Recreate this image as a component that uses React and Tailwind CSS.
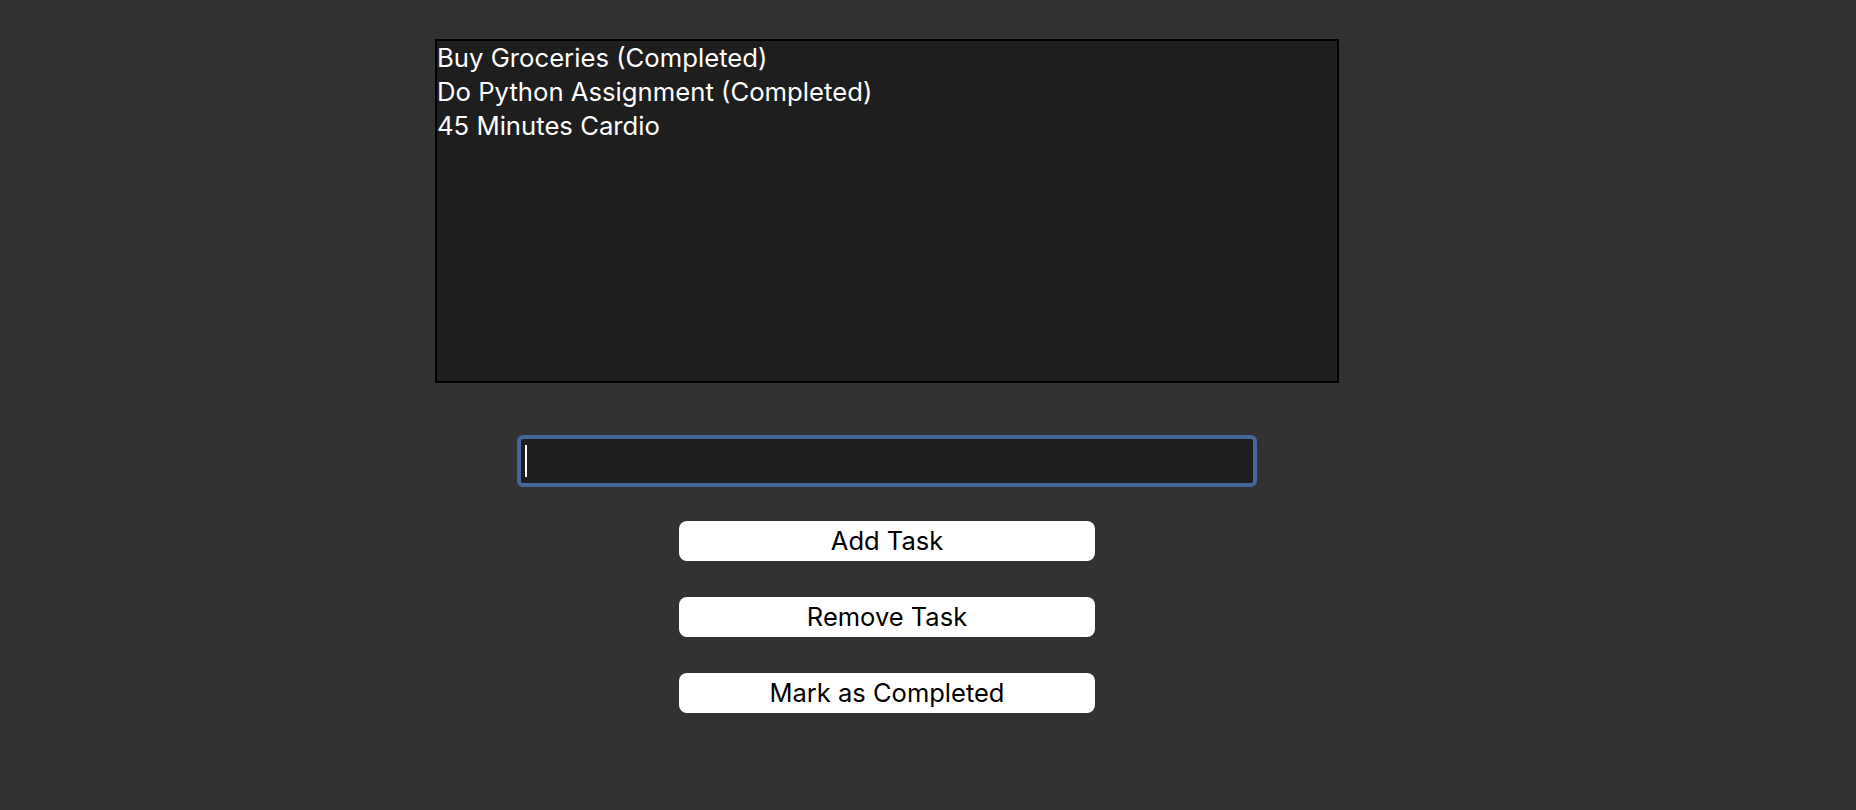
import React from "react";

const tasks = [
    "Buy Groceries (Completed)",
    "Do Python Assignment (Completed)",
    "45 Minutes Cardio",
];

const buttons = ["Add Task", "Remove Task", "Mark as Completed"];

const App = () => {
    return (
        <div
            className="min-h-[810px] w-full bg-[#323232]"
            style={{ fontFamily: "Inter, 'Noto Sans', sans-serif" }}
        >
            <div className="ml-[435px] flex w-[904px] flex-col items-center pt-[39px]">
                {/* Liste des tâches */}
                <div className="h-[344px] w-full border-2 border-black bg-[#1e1e1e]">
                    {tasks.map((task) => (
                        <div
                            key={task}
                            className="text-[25.7px] leading-[34px] text-white"
                        >
                            {task}
                        </div>
                    ))}
                </div>

                {/* Champ de saisie */}
                <div className="mt-[52px] flex h-[52px] w-[740px] items-center rounded-[6px] border-4 border-[#45669a] bg-[#1e1e1e] pl-[4px]">
                    <span className="h-[32px] w-[2px] bg-white"></span>
                </div>

                {/* Boutons */}
                <div className="mt-[34px] flex flex-col gap-[36px]">
                    {buttons.map((label) => (
                        <button
                            key={label}
                            className="h-[40px] w-[416px] rounded-[8px] bg-white text-[25.5px] leading-[40px] text-black"
                        >
                            {label}
                        </button>
                    ))}
                </div>
            </div>
        </div>
    );
};

export default App;
